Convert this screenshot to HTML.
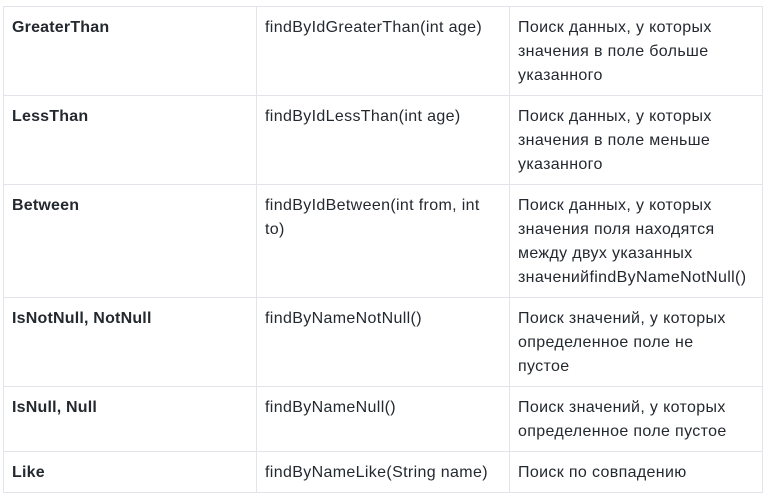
<!DOCTYPE html>
<html><head><meta charset="utf-8"><style>
html,body{margin:0;padding:0;background:#fff;width:765px;height:496px;overflow:hidden}
table{position:absolute;left:3px;top:6px;border-collapse:collapse;table-layout:fixed;width:759px;font-family:"Liberation Sans","Noto Sans CJK SC",sans-serif;font-size:16px;letter-spacing:0.35px;line-height:24px;color:#24292f}
td{border:1px solid #e1e4e8;padding:0 8px;vertical-align:top;padding-top:9px;box-sizing:border-box;white-space:nowrap;overflow:hidden}
td:first-child{font-weight:bold;letter-spacing:0.2px}
</style></head><body>
<table>
<colgroup><col style="width:253px"><col style="width:253px"><col style="width:253px"></colgroup>
<tr style="height:89px"><td>GreaterThan</td><td>findByIdGreaterThan(int age)</td><td>Поиск данных, у которых<br>значения в поле больше<br>указанного</td></tr>
<tr style="height:89px"><td>LessThan</td><td>findByIdLessThan(int age)</td><td>Поиск данных, у которых<br>значения в поле меньше<br>указанного</td></tr>
<tr style="height:113px"><td>Between</td><td>findByIdBetween(int from, int<br>to)</td><td>Поиск данных, у которых<br>значения поля находятся<br>между двух указанных<br>значенийfindByNameNotNull()</td></tr>
<tr style="height:89px"><td>IsNotNull, NotNull</td><td>findByNameNotNull()</td><td>Поиск значений, у которых<br>определенное поле не<br>пустое</td></tr>
<tr style="height:65px"><td>IsNull, Null</td><td>findByNameNull()</td><td>Поиск значений, у которых<br>определенное поле пустое</td></tr>
<tr style="height:41px"><td>Like</td><td>findByNameLike(String name)</td><td>Поиск по совпадению</td></tr>
</table>
</body></html>
